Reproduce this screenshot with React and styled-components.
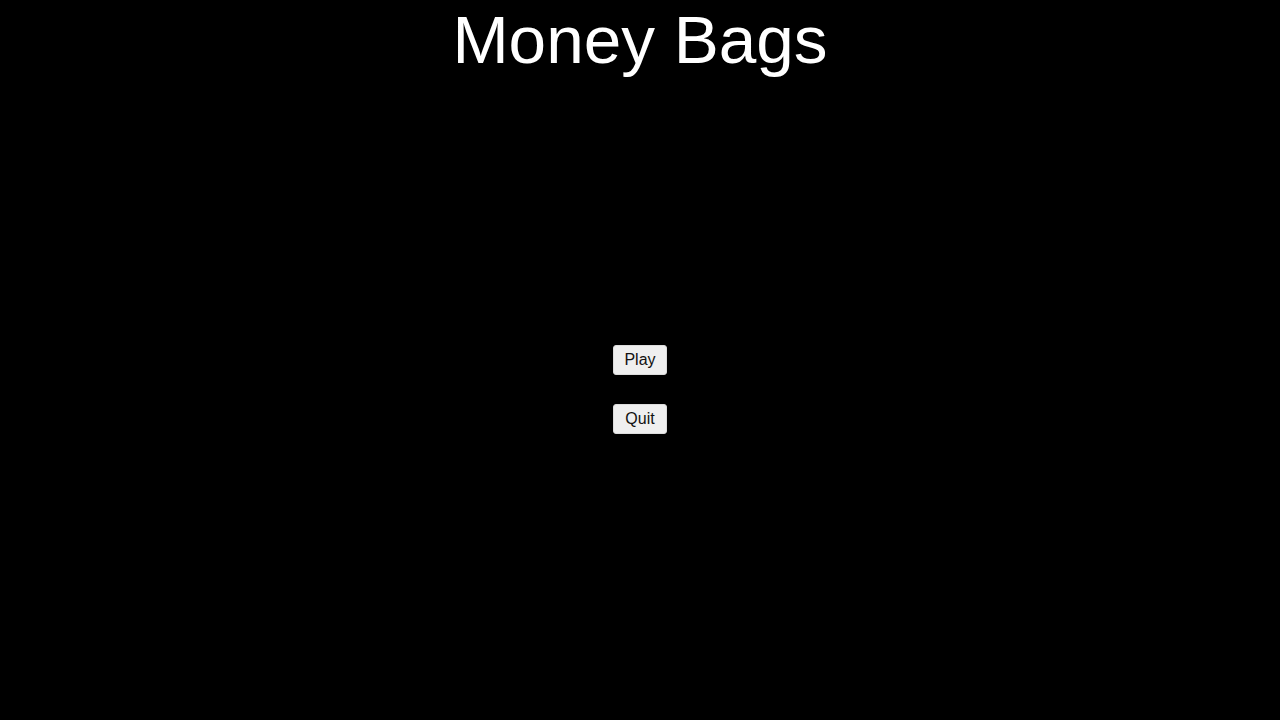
import React from 'react';
import styled, { createGlobalStyle } from 'styled-components';

const GlobalStyle = createGlobalStyle`
  html, body {
    margin: 0;
    padding: 0;
    background: #000;
  }
  body {
    font-family: "Liberation Sans", Arial, sans-serif;
  }
`;

const Screen = styled.div`
  width: 100%;
  height: 100vh;
  background: #000;
  color: #fff;
  display: flex;
  flex-direction: column;
  align-items: center;
`;

const Title = styled.h1`
  margin: 3px 0 0;
  font-size: 67.5px;
  font-weight: 400;
  line-height: 73px;
  color: #fff;
`;

const Menu = styled.div`
  padding-top: 269px;
  display: flex;
  flex-direction: column;
  align-items: center;
  gap: 29px;
`;

const MenuButton = styled.button`
  font-family: "Liberation Sans", Arial, sans-serif;
  font-size: 16px;
  line-height: 18px;
  color: #111;
  background: #efefef;
  border: 1px solid #dcdcdc;
  border-radius: 3px;
  padding: 5px 10px;
  min-width: 54px;
  height: 30px;
  cursor: pointer;
`;

const App = () => {
  return (
    <>
      <GlobalStyle />
      <Screen>
        <Title>Money Bags</Title>
        <Menu>
          <MenuButton>Play</MenuButton>
          <MenuButton>Quit</MenuButton>
        </Menu>
      </Screen>
    </>
  );
};

export default App;
